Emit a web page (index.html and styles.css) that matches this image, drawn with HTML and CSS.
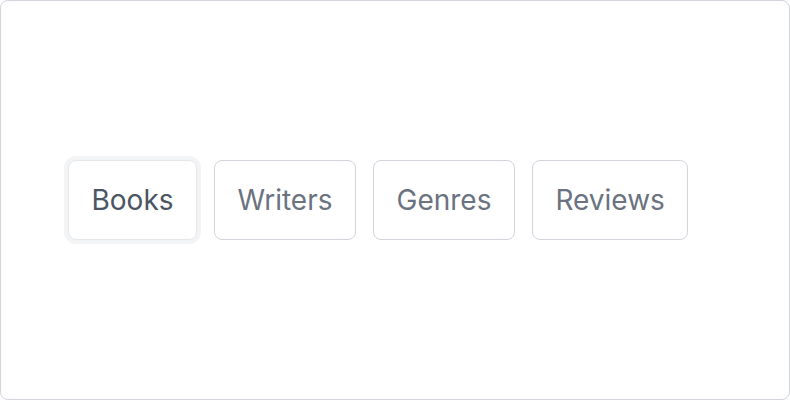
FILE: index.html
```html
<!DOCTYPE html>
<html>
<head>
<meta charset="utf-8">
<link rel="stylesheet" href="styles.css">
</head>
<body>
<div class="card">
  <nav class="tabs">
    <button class="tab tab-active">Books</button>
    <button class="tab">Writers</button>
    <button class="tab">Genres</button>
    <button class="tab">Reviews</button>
  </nav>
</div>
</body>
</html>
```
FILE: styles.css
```css
html, body {
  margin: 0;
  padding: 0;
  background: #ffffff;
}
.card {
  box-sizing: border-box;
  width: 790px;
  height: 400px;
  border: 1px solid #d1d5db;
  border-radius: 8px;
  background: #ffffff;
  display: flex;
  align-items: center;
  padding-left: 67px;
}
.tabs {
  display: flex;
  gap: 17px;
}
.tab {
  font-family: Inter, "Noto Sans", sans-serif;
  font-size: 28px;
  line-height: 34px;
  padding: 22px 22.5px;
  border: 1px solid #d1d5db;
  border-radius: 8px;
  background: #ffffff;
  color: #6b7280;
  margin: 0;
}
.tab-active {
  color: #4b5563;
  border-color: #e5e7eb;
  box-shadow: 0 0 0 4px #f3f4f6;
}
```
